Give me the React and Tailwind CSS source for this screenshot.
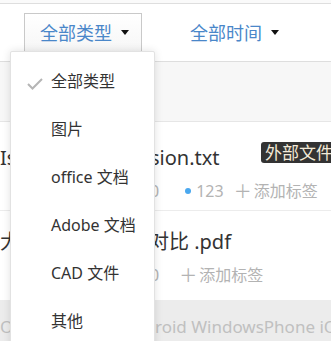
import React from "react";

const font = { fontFamily: '"Noto Sans", "Noto Sans CJK SC", sans-serif' };

function Caret() {
  return (
    <svg width="8" height="5" viewBox="0 0 8 5" className="ml-[9px]">
      <path d="M0 0 L8 0 L4 5 Z" fill="#111" />
    </svg>
  );
}

export default function App() {
  const items = ["全部类型", "图片", "office 文档", "Adobe 文档", "CAD 文件", "其他"];
  return (
    <div
      className="relative w-[331px] h-[341px] overflow-hidden bg-[#f7f7f7]"
      style={font}
    >
      <div className="h-[3px] bg-[#fafafa]" />
      <div className="h-[59px] bg-white border-t border-b border-[#dedede] flex items-center">
        <div className="ml-[24px] w-[118px] h-[40px] border border-[#c9c9c9] bg-gradient-to-b from-white to-[#f6f6f6] flex items-center pl-[15px]">
          <span className="text-[18px] text-[#4a87c9] leading-none">全部类型</span>
          <Caret />
        </div>
        <div className="ml-[48px] flex items-center">
          <span className="text-[18px] text-[#4a87c9] leading-none">全部时间</span>
          <Caret />
        </div>
      </div>
      <div className="h-[59px]" />
      <div className="bg-white border-t border-[#e6e6e6]">
        <div className="h-[89px] border-b border-[#ececec] relative">
          <div className="flex items-center h-[56px] pt-[16px] text-[20px] text-[#333] whitespace-nowrap">
            <span className="w-[150px] shrink-0 overflow-hidden">IsolatedVersion</span>
            <span className="shrink-0">sion.txt</span>
          </div>
          <div className="absolute left-[261px] top-[20px] h-[21px] px-[4px] rounded-[3px] bg-[#333] text-[#f3ead8] text-[17px] leading-[21px] whitespace-nowrap">
            外部文件
          </div>
          <div className="flex items-center h-[24px] mt-[1px] text-[16px] text-[#b3b3b3] whitespace-nowrap">
            <span className="w-[150px] shrink-0" />
            <span className="shrink-0">0</span>
            <span className="ml-[26px] w-[6px] h-[6px] shrink-0 rounded-full bg-[#4aa8ef]" />
            <span className="ml-[5px] shrink-0">123</span>
            <span className="ml-[10px] text-[18px] shrink-0">＋</span>
            <span className="ml-[2px] shrink-0">添加标签</span>
          </div>
        </div>
        <div className="h-[89px]">
          <div className="flex items-center h-[50px] pt-[12px] text-[20px] text-[#333] whitespace-nowrap">
            <span className="w-[149px] shrink-0 overflow-hidden">大文件版本对比</span>
            <span className="shrink-0">对比 .pdf</span>
          </div>
          <div className="flex items-center h-[24px] mt-[2px] text-[16px] text-[#b3b3b3] whitespace-nowrap">
            <span className="w-[150px] shrink-0" />
            <span className="shrink-0">0</span>
            <span className="ml-[20px] text-[18px] shrink-0">＋</span>
            <span className="ml-[2px] shrink-0">添加标签</span>
          </div>
        </div>
      </div>
      <div className="h-[41px] bg-[#ececec] flex items-center pt-[12px] text-[17px] text-[#c0c0c0] whitespace-nowrap">
        <span className="w-[155px] shrink-0 overflow-hidden">OS Android</span>
        <span className="shrink-0">roid WindowsPhone iOS</span>
      </div>

      <div className="absolute left-[10px] top-[51px] w-[145px] h-[300px] bg-white border border-[#e2e2e2] rounded-[2px] shadow-[0_0_8px_rgba(0,0,0,0.12)] pt-[5px]">
        {items.map((t, i) => (
          <div key={t} className="h-[48px] flex items-center relative">
            {i === 0 && (
              <svg
                width="16"
                height="12"
                viewBox="0 0 16 12"
                className="absolute left-[16px] top-[21px]"
              >
                <path d="M1 6 L5.5 10.5 L15 1" fill="none" stroke="#b5b5b5" strokeWidth="2" />
              </svg>
            )}
            <span className="ml-[40px] text-[16px] text-[#333] leading-none whitespace-nowrap">{t}</span>
          </div>
        ))}
      </div>
    </div>
  );
}
